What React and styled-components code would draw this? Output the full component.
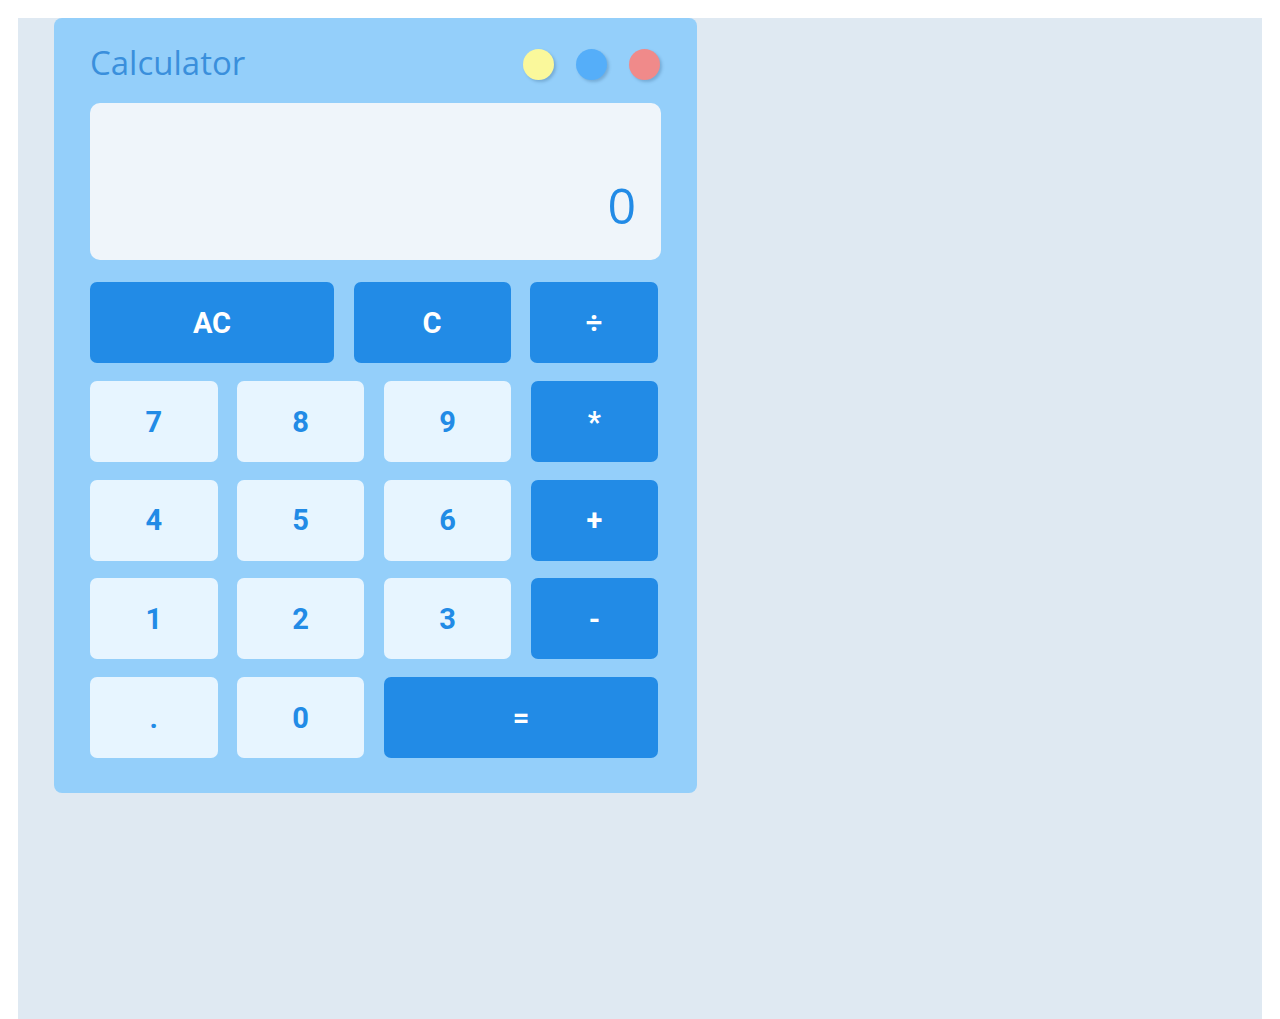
import React from "react";
import styled, { createGlobalStyle } from "styled-components";

const Global = createGlobalStyle`
  html, body { margin: 0; padding: 0; background: #ffffff; }
  body { font-family: "Open Sans", "Liberation Sans", sans-serif; }
`;

const Page = styled.div`
  margin: 18px 18px 0;
  min-height: 1001px;
  background: #dfe9f2;
  display: flex;
  align-items: flex-start;
  padding-left: 36px;
`;

const Card = styled.div`
  width: 643px;
  box-sizing: border-box;
  background: #94cffa;
  border-radius: 8px;
  padding: 26px 36px 35px;
  display: flex;
  flex-direction: column;
`;

const Header = styled.div`
  height: 41px;
  display: flex;
  align-items: center;
  justify-content: space-between;
  margin-bottom: 18px;
  padding-right: 1px;
`;

const Title = styled.h1`
  margin: 0;
  font-family: "Open Sans", sans-serif;
  font-weight: 400;
  font-size: 33px;
  line-height: 1;
  color: #3a8fdc;
  position: relative;
  top: -2px;
`;

const Dots = styled.div`
  display: flex;
  gap: 22px;
`;

const Dot = styled.span`
  width: 31px;
  height: 31px;
  border-radius: 50%;
  background: ${(p) => p.$color};
  box-shadow: 2px 2px 3px rgba(30, 70, 110, 0.25);
`;

const Display = styled.div`
  height: 157px;
  box-sizing: border-box;
  background: #eff5fa;
  border-radius: 10px;
  display: flex;
  align-items: flex-end;
  justify-content: flex-end;
  padding: 0 25px 30px;
  font-family: "Open Sans", sans-serif;
  font-size: 50px;
  line-height: 1;
  color: #228be6;
  margin-bottom: 22px;
`;

const TopRow = styled.div`
  display: grid;
  grid-template-columns: 244px 157px 128px;
  gap: 19.5px;
  margin-bottom: 18px;
`;

const Grid = styled.div`
  display: grid;
  grid-template-columns: 127.5px 127.5px 127.5px 127.5px;
  grid-auto-rows: 81px;
  column-gap: 19.4px;
  row-gap: 17.7px;
`;

const Key = styled.button`
  height: 81px;
  border: none;
  border-radius: 7px;
  margin: 0;
  padding: 0;
  font-family: Roboto, "Liberation Sans", sans-serif;
  font-weight: 700;
  font-size: 29px;
  background: ${(p) => (p.$op ? "#228be6" : "#e7f5ff")};
  color: ${(p) => (p.$op ? "#ffffff" : "#228be6")};
  grid-column: ${(p) => (p.$span ? `span ${p.$span}` : "auto")};
  display: flex;
  align-items: center;
  justify-content: center;
  cursor: pointer;
`;

const rows = [
  ["7", "8", "9", "*"],
  ["4", "5", "6", "+"],
  ["1", "2", "3", "-"],
];

export default function App() {
  return (
    <>
      <Global />
      <Page>
        <Card>
          <Header>
            <Title>Calculator</Title>
            <Dots>
              <Dot $color="#faf89b" />
              <Dot $color="#55aef9" />
              <Dot $color="#f08a8a" />
            </Dots>
          </Header>
          <Display>0</Display>
          <TopRow>
            <Key $op>AC</Key>
            <Key $op>C</Key>
            <Key $op>÷</Key>
          </TopRow>
          <Grid>
            {rows.flat().map((k, i) => (
              <Key key={i} $op={i % 4 === 3}>
                {k}
              </Key>
            ))}
            <Key>.</Key>
            <Key>0</Key>
            <Key $op $span={2}>=</Key>
          </Grid>
        </Card>
      </Page>
    </>
  );
}
